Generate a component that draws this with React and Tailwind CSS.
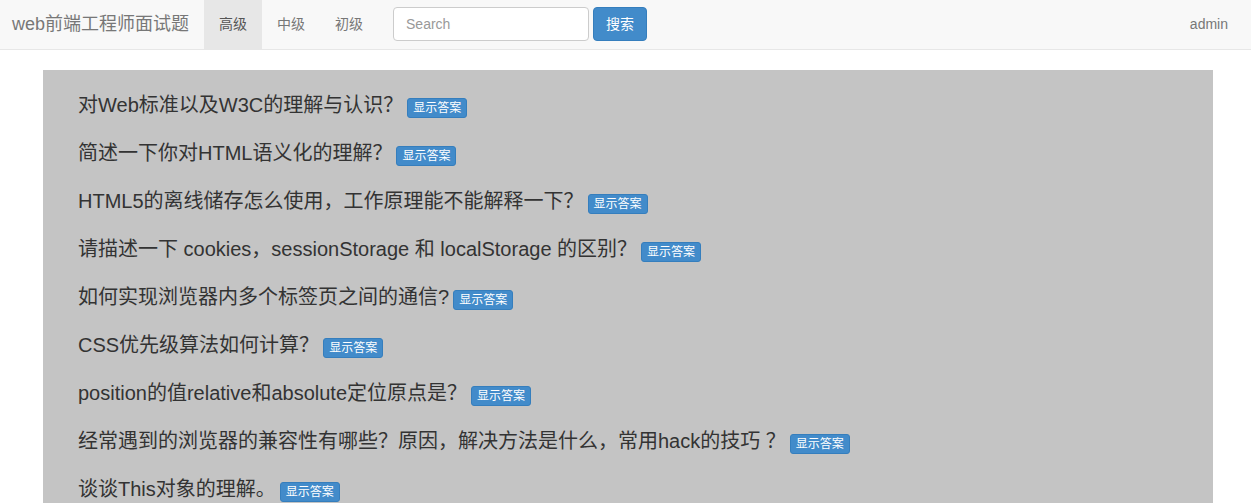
const font = { fontFamily: '"Liberation Sans", "Noto Sans CJK SC", sans-serif' };

const questions = [
  "对Web标准以及W3C的理解与认识？",
  "简述一下你对HTML语义化的理解？",
  "HTML5的离线储存怎么使用，工作原理能不能解释一下？",
  "请描述一下 cookies，sessionStorage 和 localStorage 的区别？",
  "如何实现浏览器内多个标签页之间的通信?",
  "CSS优先级算法如何计算？",
  "position的值relative和absolute定位原点是？",
  "经常遇到的浏览器的兼容性有哪些？原因，解决方法是什么，常用hack的技巧 ？",
  "谈谈This对象的理解。",
];

export default function App() {
  return (
    <div className="min-h-screen bg-white text-[#333]" style={font}>
      {/* NAVBAR */}
      <nav className="h-[50px] bg-[#f8f8f8] border-b border-[#e7e7e7] flex items-stretch">
        <a className="pl-[12px] pr-[15px] flex items-center text-[18px] text-[#777]">
          web前端工程师面试题
        </a>
        <ul className="flex items-stretch text-[14px]">
          <li className="px-[15px] flex items-center bg-[#e7e7e7] text-[#555]">高级</li>
          <li className="px-[15px] flex items-center text-[#777]">中级</li>
          <li className="px-[15px] flex items-center text-[#777]">初级</li>
        </ul>
        <form className="ml-[15px] pt-[7px] flex items-start gap-[4px]">
          <input
            type="text"
            placeholder="Search"
            className="w-[196px] h-[34px] px-[12px] text-[14px] bg-white border border-[#ccc] rounded-[4px] placeholder:text-[#999] outline-none"
            style={font}
          />
          <button
            type="button"
            className="h-[34px] px-[12px] text-[14px] text-white bg-[#428bca] border border-[#357ebd] rounded-[4px]"
          >
            搜索
          </button>
        </form>
        <div className="ml-auto pr-[23px] flex items-center text-[14px] text-[#777]">admin</div>
      </nav>

      {/* QUESTIONS */}
      <div className="mt-[20px] ml-[43px] w-[1170px] bg-[#c4c4c4] pt-[21px] pb-[20px] pl-[35px]">
        <ul className="flex flex-col gap-[20px]">
          {questions.map((q) => (
            <li key={q} className="text-[20px] leading-[28px]">
              {q}
              <button
                type="button"
                className="ml-[4px] inline-block align-[0px] px-[5px] text-[12px] leading-[18px] text-white bg-[#428bca] border border-[#357ebd] rounded-[3px]"
              >
                显示答案
              </button>
            </li>
          ))}
        </ul>
      </div>
    </div>
  );
}
